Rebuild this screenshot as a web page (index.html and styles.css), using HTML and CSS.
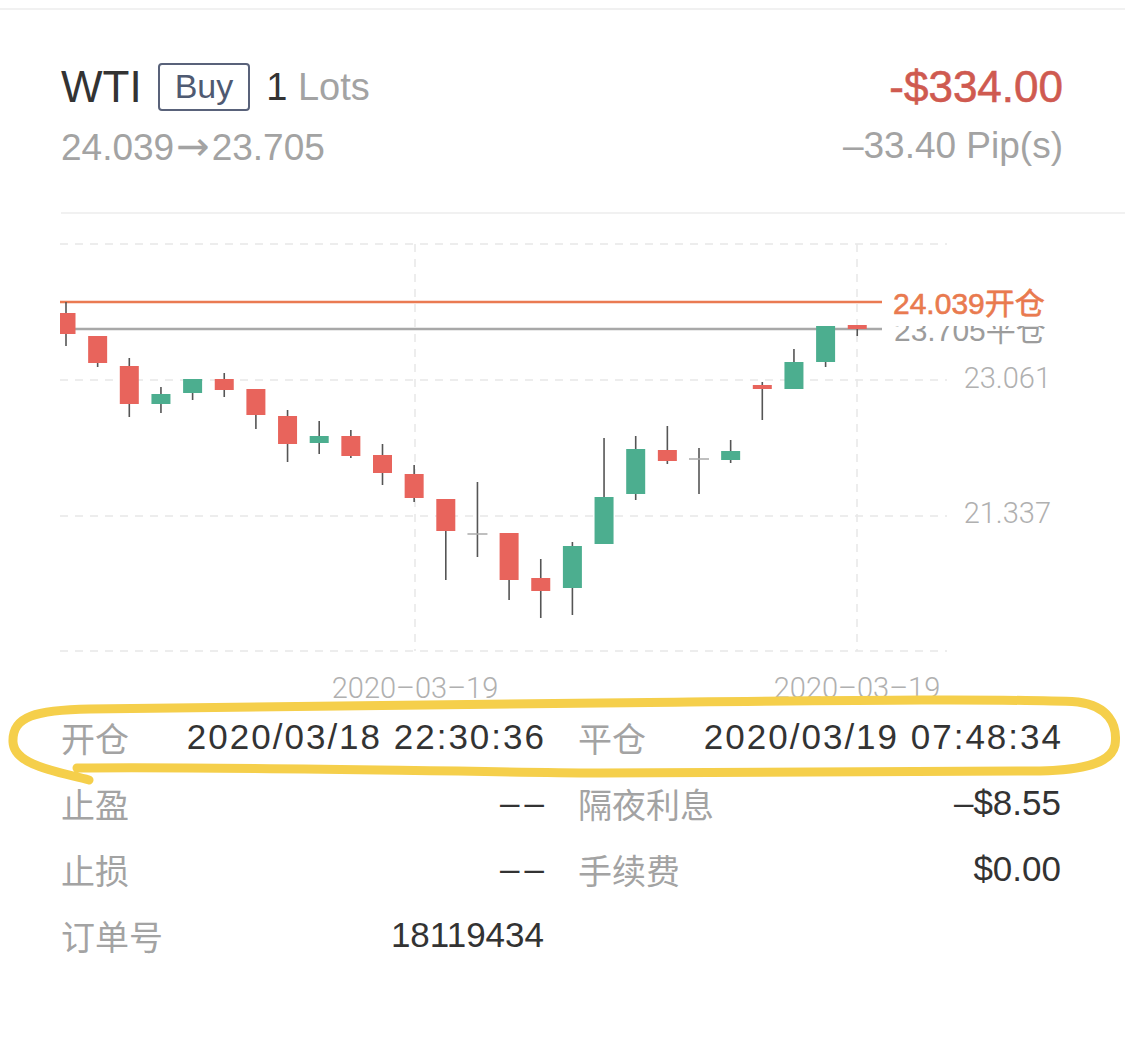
FILE: index.html
```html
<!DOCTYPE html>
<html lang="zh-CN">
<head>
    <meta charset="UTF-8">
    <title>WTI 订单详情</title>
    <link rel="stylesheet" href="styles.css">
</head>
<body>
  <div class="page">
    <div class="topline"></div>

    <!-- order header -->
    <div class="header">
      <div class="head-row">
        <div class="symbol">
          <span class="name">WTI</span>
          <span class="side">Buy</span>
          <span class="lots"><b>1</b> Lots</span>
        </div>
        <span class="profit">-$334.00</span>
      </div>
      <div class="head-row sub">
        <span>24.039<span class="arrow">→</span>23.705</span>
        <span>–33.40 Pip(s)</span>
      </div>
    </div>

    <!-- candle chart, page coordinates shifted by the header height -->
    <svg class="chart" width="1125" height="490" viewBox="0 0 1125 490">
      <g transform="translate(0,-214)">
        <g class="grid">
          <line x1="60" y1="244" x2="947" y2="244"/>
          <line x1="60" y1="380" x2="947" y2="380"/>
          <line x1="60" y1="516" x2="947" y2="516"/>
          <line x1="60" y1="651" x2="947" y2="651"/>
          <line x1="415" y1="244" x2="415" y2="651"/>
          <line x1="857" y1="244" x2="857" y2="651"/>
        </g>
        <text class="axis" x="1051" y="388" text-anchor="end">23.061</text>
        <text class="axis" x="1051" y="523" text-anchor="end">21.337</text>
        <text class="axis" x="415" y="698" text-anchor="middle">2020–03–19</text>
        <text class="axis" x="857" y="698" text-anchor="middle">2020–03–19</text>

        <line class="close-line" x1="60" y1="329" x2="882" y2="329"/>
        <line class="open-line" x1="60" y1="302" x2="882" y2="302"/>

        <g id="candles"></g>

        <text class="close-label" x="894" y="341">23.705平仓</text>
        <rect x="888" y="286" width="170" height="40" fill="#fff"/>
        <text class="open-label" x="893" y="314">24.039开仓</text>
      </g>
    </svg>

    <!-- order details -->
    <div class="details">
      <div class="cell"><span class="label">开仓</span><span class="value wide">2020/03/18 22:30:36</span></div>
      <div class="cell"><span class="label">平仓</span><span class="value wide">2020/03/19 07:48:34</span></div>
      <div class="cell"><span class="label">止盈</span><span class="value dash">––</span></div>
      <div class="cell"><span class="label">隔夜利息</span><span class="value">–$8.55</span></div>
      <div class="cell"><span class="label">止损</span><span class="value dash">––</span></div>
      <div class="cell"><span class="label">手续费</span><span class="value">$0.00</span></div>
      <div class="cell"><span class="label">订单号</span><span class="value">18119434</span></div>
      <div class="cell"></div>
    </div>

    <!-- hand drawn highlight over the first row -->
    <svg class="marker" width="1125" height="1061" viewBox="0 0 1125 1061">
      <path d="M 89 780 C 60 772, 14 766, 13 742 C 12 716, 36 710, 90 709 L 600 703 C 800 701, 1000 698, 1078 702 C 1108 706, 1118 724, 1115 745 C 1111 764, 1082 770, 1040 771 L 600 773 C 400 771, 200 766, 77 768"/>
    </svg>
  </div>
  <script src="chart.js"></script>
</body>
</html>
```

FILE: styles.css
```css
body {
    margin: 0;
    background: #fff;
    font-family: "Liberation Sans", "Noto Sans CJK SC", sans-serif;
    color: #333;
}

.page {
    position: relative;
    width: 1125px;
    height: 1061px;
    padding-top: 8px;
    box-sizing: border-box;
    overflow: hidden;
}

.topline {
    border-top: 2px solid #f1f1f1;
}

.header {
    margin-left: 61px;
    padding: 52px 62px 0 0;
    height: 150px;
    border-bottom: 2px solid #f1f1f1;
}

.head-row {
    display: flex;
    justify-content: space-between;
    align-items: center;
    height: 50px;
}

.head-row.sub {
    margin-top: 14px;
    height: 40px;
    font-size: 37px;
    color: #a3a3a3;
}

.arrow {
    font-family: "DejaVu Sans", sans-serif;
    font-size: 40px;
    margin: 0 2px;
}

.symbol {
    display: flex;
    align-items: center;
    gap: 16px;
}

.name {
    font-size: 44px;
    color: #333;
}

.side {
    font-size: 34px;
    color: #4f5a72;
    border: 2px solid #59627a;
    border-radius: 4px;
    padding: 2px 15px 4px;
    line-height: 38px;
}

.lots {
    font-size: 38px;
    color: #a3a3a3;
}

.lots b {
    font-weight: normal;
    color: #333;
}

.profit {
    font-size: 44px;
    color: #cf5a50;
    -webkit-text-stroke: 0.6px #cf5a50;
}

.chart {
    display: block;
    overflow: visible;
}

.grid line {
    stroke: #e8e8e8;
    stroke-width: 1.5;
    stroke-dasharray: 8 7;
}

.axis {
    font-family: Roboto, "Liberation Sans", sans-serif;
    font-weight: 300;
    font-size: 29px;
    fill: #b0b0b0;
}

.open-line {
    stroke: #ea7a52;
    stroke-width: 2.5;
}

.close-line {
    stroke: #a8a8a8;
    stroke-width: 2.5;
}

.open-label,
.close-label {
    font-family: "Liberation Sans", "Noto Sans CJK SC", sans-serif;
    font-size: 30px;
}

.open-label {
    fill: #e97a4f;
    stroke: #e97a4f;
    stroke-width: 0.6;
}

.close-label {
    fill: #9c9c9c;
}

.details {
    display: grid;
    grid-template-columns: 1fr 1fr;
    column-gap: 34px;
    margin: 0 64px 0 61px;
}

.cell {
    display: flex;
    justify-content: space-between;
    align-items: center;
    height: 66px;
}

.label {
    font-family: "Noto Sans CJK SC", sans-serif;
    font-size: 34px;
    color: #a3a3a3;
}

.value {
    font-size: 35px;
    color: #333;
}

.value.wide {
    letter-spacing: 2px;
    margin-right: -2px;
}

.value.dash {
    letter-spacing: 5px;
    margin-right: -5px;
}

.marker {
    position: absolute;
    top: 0;
    left: 0;
    pointer-events: none;
}

.marker path {
    fill: none;
    stroke: #f5cf4b;
    stroke-width: 9;
    stroke-linecap: round;
    stroke-linejoin: round;
}
```

FILE: chart.js
```js
// [bodyTop, bodyBottom, wickTop, wickBottom, kind]  r = down, g = up, d = doji
var candles = [
    [313, 334, 302, 346, 'r'],
    [336, 363, 336, 367, 'r'],
    [366, 404, 358, 417, 'r'],
    [394, 404, 387, 413, 'g'],
    [379, 393, 379, 400, 'g'],
    [379, 390, 373, 397, 'r'],
    [389, 415, 389, 429, 'r'],
    [416, 444, 410, 462, 'r'],
    [436, 443, 421, 454, 'g'],
    [436, 456, 430, 458, 'r'],
    [455, 473, 444, 485, 'r'],
    [474, 498, 465, 502, 'r'],
    [499, 531, 499, 580, 'r'],
    [534, 534, 482, 557, 'd'],
    [533, 580, 533, 600, 'r'],
    [578, 591, 559, 618, 'r'],
    [546, 588, 542, 615, 'g'],
    [497, 544, 438, 544, 'g'],
    [449, 494, 436, 500, 'g'],
    [450, 461, 426, 464, 'r'],
    [459, 459, 448, 494, 'd'],
    [451, 460, 440, 463, 'g'],
    [385, 389, 382, 420, 'r'],
    [362, 389, 349, 389, 'g'],
    [326, 362, 326, 367, 'g'],
    [325, 329, 325, 336, 'r']
];

var NS = 'http://www.w3.org/2000/svg';
var group = document.getElementById('candles');

function el(name, attrs) {
    var node = document.createElementNS(NS, name);
    for (var k in attrs) node.setAttribute(k, attrs[k]);
    group.appendChild(node);
    return node;
}

candles.forEach(function (c, i) {
    var x = 66 + i * 31.65;
    el('line', { x1: x, y1: c[2], x2: x, y2: c[3], stroke: '#555', 'stroke-width': 1.6 });
    if (c[4] === 'd') {
        el('line', { x1: x - 10, y1: c[0], x2: x + 10, y2: c[0], stroke: '#aaa', 'stroke-width': 1.5 });
        return;
    }
    var left = Math.max(60, x - 9.5);
    el('rect', {
        x: left,
        y: c[0],
        width: x + 9.5 - left,
        height: Math.max(3, c[1] - c[0]),
        fill: c[4] === 'r' ? '#e8645c' : '#4cae8f'
    });
});
```
